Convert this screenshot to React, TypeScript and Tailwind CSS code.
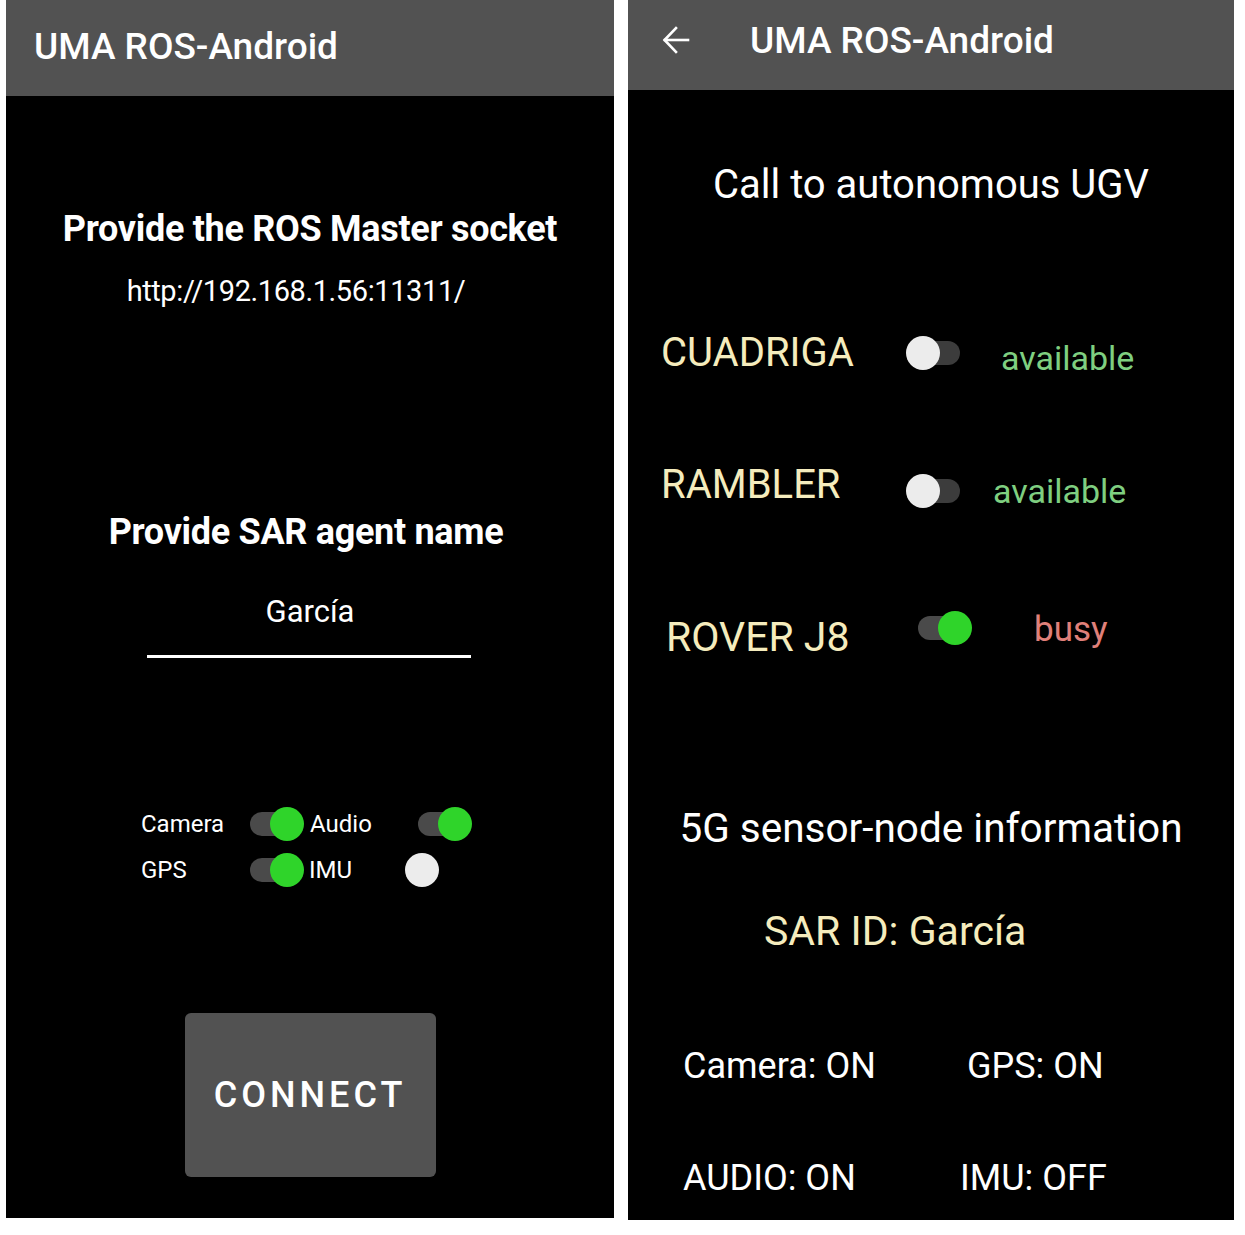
import React from 'react'

const font = { fontFamily: 'Roboto, "Liberation Sans", sans-serif' }

/* ----------------------------------------
   Switch (android-like)
---------------------------------------- */
function Switch({ on, dark = false }: { on: boolean; dark?: boolean }) {
  return (
    <div className="relative w-[56px] h-[34px] shrink-0">
      <div
        className={
          on
            ? 'absolute left-0 top-[5px] w-[52px] h-[24px] rounded-full bg-[#4a4a4a]'
            : dark
              ? 'absolute left-[4px] top-[5px] w-[50px] h-[24px] rounded-full bg-[#3c3c3c]'
              : 'absolute left-[4px] top-[5px] w-[50px] h-[24px] rounded-full bg-black'
        }
      />
      <div
        className={
          on
            ? 'absolute left-[20px] top-0 w-[34px] h-[34px] rounded-full bg-[#2fd42a]'
            : 'absolute left-0 top-0 w-[34px] h-[34px] rounded-full bg-[#ececec]'
        }
      />
    </div>
  )
}

function ArrowBack() {
  return (
    <svg width="28" height="30" viewBox="0 0 28 30" fill="none" stroke="white" strokeWidth="2.6" strokeLinecap="square">
      <path d="M3 15 H26" />
      <path d="M14 3 L2.5 15 L14 27" strokeLinejoin="miter" />
    </svg>
  )
}

/* ----------------------------------------
   Left screen: connection
---------------------------------------- */
function ConnectScreen() {
  return (
    <div className="w-[608px] h-[1218px] bg-black flex flex-col text-white" style={font}>
      <div className="h-[96px] bg-[#525252] flex items-center pl-[28px] shrink-0">
        <span className="-mt-[3px] text-[37px] leading-none font-medium">UMA ROS-Android</span>
      </div>

      <div className="mt-[115px] text-center text-[36px] leading-none font-bold tracking-[-0.3px]">
        Provide the ROS Master socket
      </div>
      <div className="mt-[30px] pr-[28px] text-center text-[29px] leading-none tracking-[-0.4px]">
        http://192.168.1.56:11311/
      </div>

      <div className="mt-[208px] pr-[8px] text-center text-[36px] leading-none font-bold tracking-[-0.3px]">
        Provide SAR agent name
      </div>
      <div className="mt-[46px] text-center text-[31px] leading-none">García</div>
      <div className="mt-[28px] ml-[141px] w-[324px] h-[3px] bg-white" />

      {/* sensors */}
      <div className="mt-[143px] pl-[135px] flex flex-col text-[24px] leading-none">
        <div className="h-[46px] flex items-center">
          <span className="w-[109px]">Camera</span>
          <Switch on />
          <span className="ml-[4px] w-[108px]">Audio</span>
          <Switch on />
        </div>
        <div className="h-[46px] flex items-center">
          <span className="w-[109px]">GPS</span>
          <Switch on />
          <span className="ml-[3px] w-[96px]">IMU</span>
          <Switch on={false} />
        </div>
      </div>

      <button className="mt-[120px] mx-auto w-[251px] h-[164px] bg-[#525252] rounded-[6px] text-[36px] leading-none font-medium tracking-[4px] text-white">
        CONNECT
      </button>
    </div>
  )
}

/* ----------------------------------------
   Right screen: UGV call
---------------------------------------- */
function UgvScreen() {
  return (
    <div className="w-[606px] h-[1220px] bg-black flex flex-col text-white" style={font}>
      <div className="h-[90px] bg-[#525252] flex items-start pt-[22px] shrink-0">
        <div className="ml-[34px] mt-[3px]">
          <ArrowBack />
        </div>
        <span className="ml-[60px] text-[37px] leading-none font-medium">UMA ROS-Android</span>
      </div>

      <div className="mt-[75px] text-center text-[40px] leading-none">Call to autonomous UGV</div>

      {/* robots */}
      <div className="mt-[128px] h-[40px] flex items-center">
        <span className="ml-[33px] w-[245px] text-[40px] leading-none text-[#f5ecbd]">CUADRIGA</span>
        <Switch on={false} dark />
        <span className="ml-[39px] mt-[10px] text-[34px] leading-none text-[#7fcf80]">available</span>
      </div>

      <div className="mt-[92px] h-[40px] flex items-center">
        <span className="ml-[33px] w-[245px] text-[40px] leading-none text-[#f5ecbd]">RAMBLER</span>
        <div className="mt-[12px]">
          <Switch on={false} dark />
        </div>
        <span className="ml-[31px] mt-[12px] text-[34px] leading-none text-[#7fcf80]">available</span>
      </div>

      <div className="mt-[112px] h-[40px] flex items-center">
        <span className="ml-[38px] w-[252px] text-[41px] leading-none text-[#f5ecbd]">ROVER J8</span>
        <div className="-mt-[18px]">
          <Switch on />
        </div>
        <span className="ml-[60px] -mt-[16px] text-[35px] leading-none text-[#e0807a]">busy</span>
      </div>

      <div className="mt-[151px] text-center text-[40.5px] leading-none">5G sensor-node information</div>
      <div className="mt-[62px] ml-[136px] text-[41px] leading-none text-[#f5ecbd]">SAR ID: García</div>

      <div className="mt-[96px] flex text-[36px] leading-none">
        <span className="ml-[55px] w-[284px]">Camera: ON</span>
        <span>GPS: ON</span>
      </div>
      <div className="mt-[76px] flex text-[36px] leading-none">
        <span className="ml-[55px] w-[277px]">AUDIO: ON</span>
        <span>IMU: OFF</span>
      </div>
    </div>
  )
}

export default function App() {
  return (
    <div className="w-[1245px] h-[1235px] bg-white flex items-start pl-[6px] gap-[14px]">
      <ConnectScreen />
      <UgvScreen />
    </div>
  )
}
